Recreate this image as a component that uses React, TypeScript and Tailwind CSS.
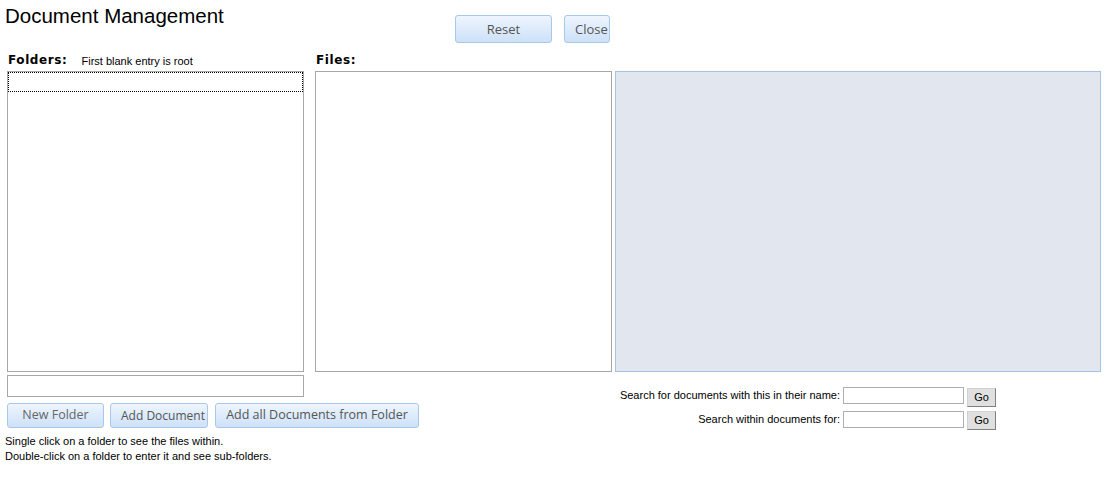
import React from 'react';

const blueBtn =
  "h-[25px] rounded-[3px] border border-[#a9c8e8] bg-gradient-to-b from-[#eef5fe] to-[#cde1f8] text-[#555] font-['Open_Sans',sans-serif] px-[10px] leading-none whitespace-nowrap";

const goBtn =
  "w-[29px] h-[19px] bg-[#e0e0e0] border border-t-[#d0d0d0] border-l-[#d0d0d0] border-r-[#808080] border-b-[#808080] text-[11px] text-black leading-none";

export default function App() {
  return (
    <div className="w-[1115px] h-[490px] bg-white font-['Liberation_Sans',Arial,sans-serif] text-black">
      {/* Header */}
      <div className="flex h-[50px]">
        <div className="w-[455px] pl-[5px] pt-[4px] text-[20.5px] leading-[24px]">Document Management</div>
        <div className="flex gap-[12px] pt-[15px]">
          <button className={`${blueBtn} text-[13px] w-[97px] h-[28px] text-[#444]`}>Reset</button>
          <button className={`${blueBtn} text-[13px] w-[46px] h-[28px] text-[#444] px-0`}>Close</button>
        </div>
      </div>

      {/* Panels */}
      <div className="flex pl-[7px]">
        <div className="w-[297px]">
          <div className="h-[21px] flex items-start pt-[3px]">
            <span className="font-['DejaVu_Sans',Verdana,sans-serif] font-bold text-[12px] leading-[14px] tracking-[0.6px] pl-[1px]">Folders:</span>
            <span className="ml-[14px] text-[11px] leading-[15px] pt-[1px]">First blank entry is root</span>
          </div>
          <div className="h-[301px] border border-[#a8a8a8] bg-white">
            <div className="h-[20px] border border-dotted border-black"></div>
          </div>
        </div>
        <div className="w-[297px] ml-[11px]">
          <div className="h-[21px] pt-[3px] pl-[1px] font-['DejaVu_Sans',Verdana,sans-serif] font-bold text-[12px] leading-[14px] tracking-[0.6px]">Files:</div>
          <div className="h-[301px] border border-[#a8a8a8] bg-white"></div>
        </div>
        <div className="w-[486px] ml-[3px]">
          <div className="h-[21px]"></div>
          <div className="h-[301px] border border-[#a6c4e2] bg-[#e1e6ef]"></div>
        </div>
      </div>

      {/* Bottom */}
      <div className="flex pl-[7px]">
        <div className="w-[420px]">
          <input className="mt-[3px] block w-[297px] h-[22px] border border-[#a8a8a8] outline-none" />
          <div className="flex mt-[6px]">
            <button className={`${blueBtn} text-[12.5px] w-[97px] text-[#666]`}>New Folder</button>
            <button className={`${blueBtn} text-[12px] w-[98px] ml-[6px] px-0`}>Add Document</button>
            <button className={`${blueBtn} text-[12.5px] w-[204px] ml-[7px] px-0`}>Add all Documents from Folder</button>
          </div>
          <div className="mt-[6px] -ml-[2px] text-[11px] leading-[15px]">
            <div>Single click on a folder to see the files within.</div>
            <div>Double-click on a folder to enter it and see sub-folders.</div>
          </div>
        </div>
        <div className="flex-1 pr-[119px] pt-[15px] flex flex-col items-end gap-[4px] text-[11px]">
          <div className="flex items-start">
            <span className="leading-[16px] mr-[3px]">Search for documents with this in their name:</span>
            <input className="w-[121px] h-[17px] border border-[#b0b0b0] outline-none" />
            <button className={`${goBtn} ml-[3px] mt-[1px]`}>Go</button>
          </div>
          <div className="flex items-start">
            <span className="leading-[16px] mr-[3px]">Search within documents for:</span>
            <input className="w-[121px] h-[17px] border border-[#b0b0b0] outline-none" />
            <button className={`${goBtn} ml-[3px]`}>Go</button>
          </div>
        </div>
      </div>
    </div>
  );
}
